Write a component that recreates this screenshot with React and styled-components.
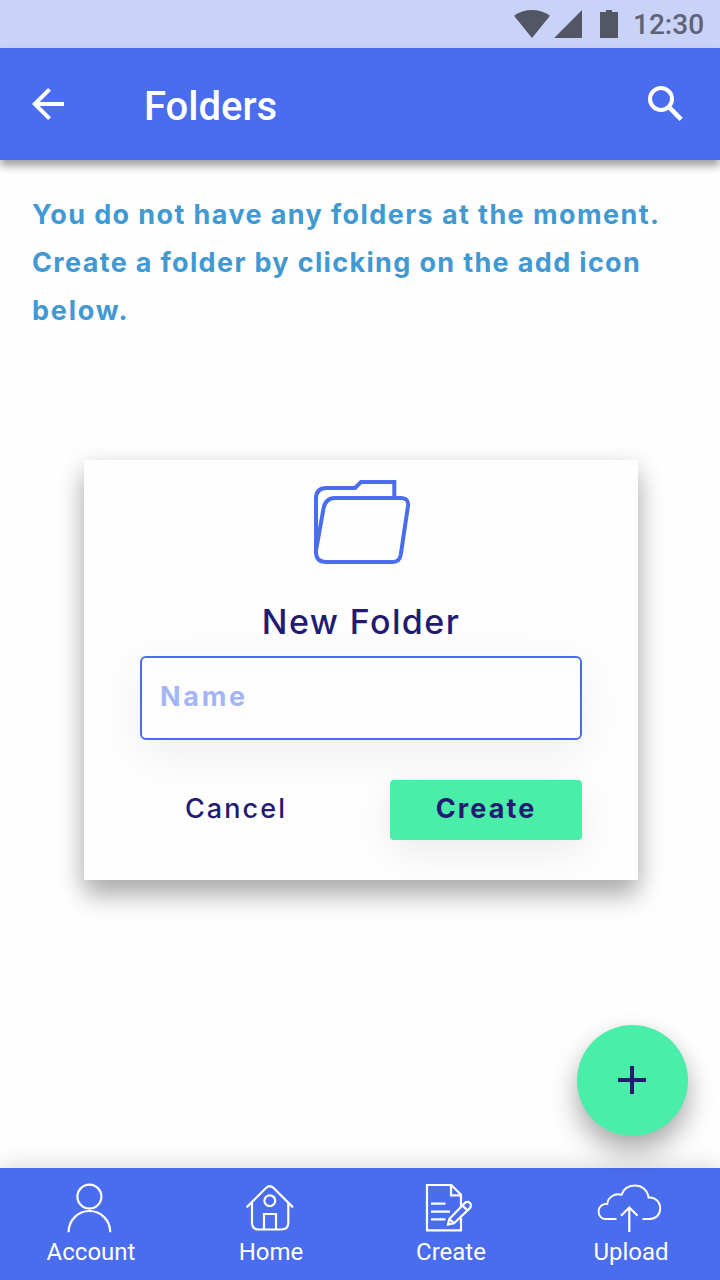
import React from "react";
import styled, { createGlobalStyle } from "styled-components";

const GlobalStyle = createGlobalStyle`
  * { box-sizing: border-box; }
  body { margin: 0; background: #fefefe; }
`;

const Screen = styled.div`
  position: relative;
  display: flex;
  flex-direction: column;
  width: 720px;
  height: 1280px;
  overflow: hidden;
  background: #fefefe;
  font-family: Inter, "Liberation Sans", sans-serif;
`;

const StatusBar = styled.div`
  display: flex;
  align-items: center;
  height: 48px;
  padding-left: 512px;
  background: #c9d3f8;
`;

const StatusIcons = styled.svg`
  flex: none;
  width: 108px;
  height: 48px;
  fill: #525665;
`;

const Clock = styled.span`
  margin-left: 13px;
  padding-top: 2px;
  font: 500 28px/46px Roboto, sans-serif;
  color: #5f6377;
`;

const AppBar = styled.header`
  display: flex;
  align-items: center;
  height: 112px;
  padding: 0 32px;
  background: #4a6cee;
  box-shadow: 0 6px 8px rgba(0, 0, 0, 0.36);
`;

const BarButton = styled.button`
  display: flex;
  padding: 0;
  border: 0;
  background: none;
  color: #fff;
`;

const Title = styled.h1`
  flex: 1;
  margin: 6px 0 0 78px;
  font: 500 40px/48px Roboto, sans-serif;
  color: #fff;
`;

const Main = styled.main`
  display: flex;
  flex: 1;
  flex-direction: column;
  align-items: flex-start;
  padding: 31px 32px 0;
`;

const Message = styled.p`
  height: 144px;
  margin: 0;
  font-size: 27px;
  font-weight: 700;
  line-height: 48px;
  white-space: nowrap;
  color: #4299d2;
`;

const Line = styled.span`
  display: block;
  letter-spacing: ${(p) => p.$spacing}px;
`;

const Dialog = styled.section`
  display: flex;
  flex-direction: column;
  align-items: center;
  width: 554px;
  height: 420px;
  margin: 125px 0 0 52px;
  padding: 16px 56px 0;
  background: #fefefe;
  color: #231a73;
  box-shadow: 0 16px 24px rgba(0, 0, 0, 0.28), 0 4px 24px rgba(0, 0, 0, 0.1);
`;

const FolderIcon = styled.svg`
  width: 104px;
  height: 92px;
  margin-left: 2px;
  fill: none;
  stroke: #4a6cee;
  stroke-width: 4;
`;

const DialogTitle = styled.h2`
  margin: 30px 0 0;
  font-size: 34px;
  font-weight: 550;
  line-height: 48px;
  letter-spacing: 1.4px;
`;

const NameField = styled.div`
  width: 442px;
  height: 84px;
  margin-top: 10px;
  padding: 0 18px;
  border: 2px solid #4a6cee;
  border-radius: 6px;
  background: #fefefe;
  box-shadow: 0 12px 48px rgba(0, 0, 0, 0.07);
  font-size: 27px;
  font-weight: 700;
  line-height: 78px;
  letter-spacing: 2.7px;
  color: #a4b5f6;
`;

const Actions = styled.div`
  display: flex;
  justify-content: space-between;
  width: 442px;
  margin-top: 40px;
`;

const Action = styled.button`
  width: 192px;
  height: 60px;
  padding: 0 0 3px;
  border: 0;
  border-radius: 4px;
  background: ${(p) => (p.$primary ? "#4aeea8" : "none")};
  box-shadow: ${(p) => (p.$primary ? "0 12px 40px rgba(0, 0, 0, 0.08)" : "none")};
  font-family: inherit;
  font-size: 27px;
  font-weight: ${(p) => (p.$primary ? 700 : 550)};
  letter-spacing: 2.1px;
  color: #231a73;
`;

const NavBar = styled.nav`
  display: grid;
  grid-template-columns: repeat(4, 1fr);
  height: 112px;
  background: #4a6cee;
  box-shadow: 0 -4px 20px rgba(0, 0, 0, 0.13);
`;

const NavItem = styled.a`
  display: flex;
  flex-direction: column;
  align-items: center;
  padding-top: 8px;
  color: #fff;
`;

const NavLabel = styled.span`
  padding-left: 2px;
  font: 400 24px/32px Roboto, sans-serif;
`;

const NavIcon = styled.svg`
  width: 80px;
  height: 60px;
  fill: none;
  stroke: #fff;
  stroke-width: 2.2;
`;

const AddButton = styled.button`
  position: absolute;
  right: 32.5px;
  bottom: 144.5px;
  display: flex;
  align-items: center;
  justify-content: center;
  width: 111px;
  height: 111px;
  border: 0;
  border-radius: 50%;
  background: #4aeea8;
  box-shadow: 0 16px 28px rgba(0, 0, 0, 0.3), 0 2px 20px rgba(0, 0, 0, 0.06);
`;

const navItems = [
  {
    label: "Account",
    icon: (
      <>
        <circle cx="39.4" cy="20.6" r="12" />
        <path d="M18.6 56.3v-.5a20.8 20.8 0 0 1 41.6 0v.5" />
      </>
    ),
  },
  {
    label: "Home",
    icon: (
      <>
        <path d="M16.6 31.400 36 12Q39.800 8.500 43.600 12L63 31.400" />
        <path d="M22 26.500V46.500q0 7 7 7h22.300q7 0 7-7V26.500" />
        <circle cx="39.800" cy="24.700" r="5.400" />
        <path d="M34 53V38h12V53" />
      </>
    ),
  },
  {
    label: "Create",
    icon: (
      <>
        <path d="M51 30.500V18.700L41.300 9H17v45.300h34V42" />
        <path d="M41 9v10.300h10.300" />
        <path d="M21 27.600h14.500M21 35.600h19M21 43.400h14.500" />
        <path d="M38 48.500 39.300 43 54.800 27a3.600 3.600 0 0 1 5.100 5.100L44 47.300Z" />
        <path d="m39.300 43 4.700 4.300M52.400 29.400l5 5" />
      </>
    ),
  },
  {
    label: "Upload",
    icon: (
      <>
        <path
          strokeWidth="1.900"
          d="M26.500 43H15.500C11.500 43 8.600 39.600 8.600 35.400c0-4.500 3.800-8 8.700-7.500C17.600 22 24.500 16.500 31.500 18.900 33.500 12.800 38.500 9.500 45 9.500c7 0 12.500 4.500 13.600 12.100C65 20.600 70.200 26 70.200 32.500 70.200 38.500 66 43 59.500 43h-7"
        />
        <path d="M39.300 56V32M31 39.800l8.300-8.300 8.300 8.300" />
      </>
    ),
  },
];

export default function App() {
  return (
    <Screen>
      <GlobalStyle />
      <StatusBar>
        <StatusIcons viewBox="0 0 108 48">
          <path d="M2 15.800C12 8.100 28 8.100 38 15.800L20 38Z" />
          <path d="M42.200 38 70 10V38Z" />
          <path d="M88 12h6v-2h6v2h6v26H88Z" />
        </StatusIcons>
        <Clock>12:30</Clock>
      </StatusBar>
      <AppBar>
        <BarButton aria-label="Back">
          <svg width="34" height="34" fill="none" stroke="currentColor" strokeWidth="4">
            <path d="M32 17H3M17.500 2.300 2.800 17l14.700 14.700" />
          </svg>
        </BarButton>
        <Title>Folders</Title>
        <BarButton aria-label="Search">
          <svg width="42" height="42" fill="none" stroke="currentColor" strokeWidth="4">
            <circle cx="15" cy="16" r="11" />
            <path strokeWidth="4.600" d="M24 25.200 35.200 36.400" />
          </svg>
        </BarButton>
      </AppBar>
      <Main>
        <Message>
          <Line $spacing={1.4}>You do not have any folders at the moment.</Line>
          <Line $spacing={1.34}>Create a folder by clicking on the add icon</Line>
          <Line $spacing={1.8}>below.</Line>
        </Message>
        <Dialog>
          <FolderIcon viewBox="0 0 104 92">
            <path d="M6 75V22.500Q6 12 16.500 12H45l6-6h33.300v16" />
            <path d="M25 22h65.500q8.500 0 7.500 8l-7.200 48.500q-1.300 7.500-8 7.500H16.500Q4.500 86 6.200 73.500L13.500 32.500Q15.500 22 25 22Z" />
          </FolderIcon>
          <DialogTitle>New Folder</DialogTitle>
          <NameField>Name</NameField>
          <Actions>
            <Action>Cancel</Action>
            <Action $primary>Create</Action>
          </Actions>
        </Dialog>
      </Main>
      <NavBar>
        {navItems.map((item) => (
          <NavItem key={item.label}>
            <NavIcon viewBox="0 0 80 60">{item.icon}</NavIcon>
            <NavLabel>{item.label}</NavLabel>
          </NavItem>
        ))}
      </NavBar>
      <AddButton aria-label="Add folder">
        <svg width="28" height="28" stroke="#231a73" strokeWidth="4">
          <path d="M14 0v28M0 14h28" />
        </svg>
      </AddButton>
    </Screen>
  );
}
